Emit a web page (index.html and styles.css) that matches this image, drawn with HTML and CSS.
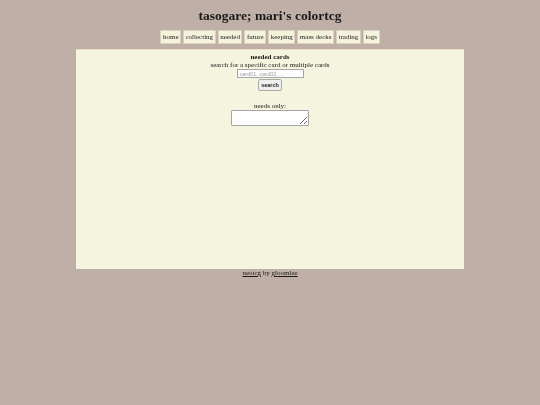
FILE: index.html
```html
<!DOCTYPE html>
<html>
<head>
<meta charset="utf-8">
<link rel="stylesheet" href="styles.css">
</head>
<body>
<h1 class="title">tasogare; mari's colortcg</h1>
<nav class="nav">
  <a class="nav-item">home</a>
  <a class="nav-item">collecting</a>
  <a class="nav-item">needed</a>
  <a class="nav-item">future</a>
  <a class="nav-item">keeping</a>
  <a class="nav-item">mass decks</a>
  <a class="nav-item">trading</a>
  <a class="nav-item">logs</a>
</nav>
<main class="content">
  <div class="heading">needed cards</div>
  <div class="line">search for a specific card or multiple cards</div>
  <div class="search-row"><input class="search-input" type="text" placeholder="card01, card02, ..."></div>
  <div class="search-row"><button class="search-btn">search</button></div>
  <div class="needs">
    <div class="line">needs only:</div>
    <textarea class="needs-box"></textarea>
  </div>
</main>
<footer class="footer"><a class="flink">neotcg</a> by <a class="flink">gloomlee</a></footer>
</body>
</html>
```
FILE: styles.css
```css
html, body { margin: 0; padding: 0; }
body {
  background: #bfafa6;
  font-family: "Liberation Serif", "Times New Roman", serif;
  font-size: 7px;
  color: #1a1a1a;
}
.title {
  margin: 0;
  padding-top: 7px;
  text-align: center;
  font-size: 13.5px;
  font-weight: bold;
  line-height: 18px;
}
.nav {
  display: flex;
  justify-content: center;
  gap: 2px;
  margin-top: 5px;
}
.nav-item {
  background: #f5f3dc;
  border: 1px solid #d9d2c0;
  padding: 0 1.5px;
  height: 12px;
  line-height: 12px;
  font-size: 7px;
  color: #222;
}
.content {
  width: 388px;
  height: 220px;
  margin: 5px auto 0;
  background: #f5f4de;
  border-top: 1px solid #e8ddc9;
  box-sizing: border-box;
  text-align: center;
  padding-top: 3px;
}
.heading { font-weight: bold; line-height: 8px; }
.line { line-height: 8px; }
.search-row { display: flex; justify-content: center; }
.search-input {
  width: 67px;
  height: 9px;
  box-sizing: border-box;
  border: 1px solid #a5a5a5;
  font-family: "Liberation Sans", Arial, sans-serif;
  font-size: 5.5px;
  padding: 0 2px;
  margin: 0;
  background: #fff;
}
.search-input::placeholder { color: #9a9a9a; }
.search-btn {
  margin-top: 1px;
  height: 12px;
  width: 24px;
  padding: 0;
  font-family: "Liberation Sans", Arial, sans-serif;
  font-size: 5.5px;
  font-weight: bold;
  background: #efefef;
  border: 1px solid #aaa;
  border-radius: 2px;
  color: #222;
}
.needs { margin-top: 11px; }
.needs-box {
  width: 78px;
  height: 16px;
  box-sizing: border-box;
  border: 1px solid #a5a5a5;
  border-radius: 1px;
  display: block;
  margin: 0 auto;
  background: #fff;
}
.footer {
  text-align: center;
  line-height: 9px;
  padding-top: 0;
}
.flink { text-decoration: underline; color: #1a1a1a; }
```
